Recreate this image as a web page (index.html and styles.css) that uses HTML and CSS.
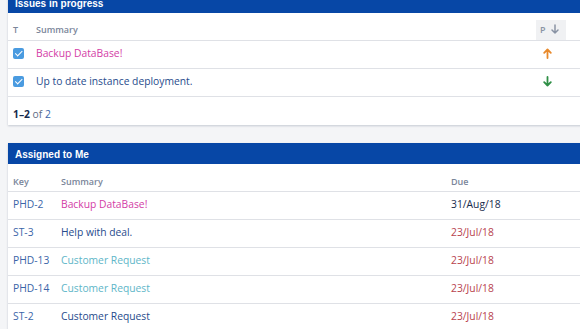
FILE: index.html
```html
<!DOCTYPE html>
<html lang="en">
<head>
    <meta charset="UTF-8">
    <meta name="viewport" content="width=device-width, initial-scale=1.0">
    <title>Dashboard</title>
    <link rel="stylesheet" href="styles.css">
</head>
<body>
    <div class="dashboard">
        <!-- Issues in progress -->
        <section class="gadget">
            <div class="gadget-title">Issues in progress</div>
            <table class="issues">
                <thead>
                    <tr>
                        <th class="col-type">T</th>
                        <th>Summary</th>
                        <th class="col-priority">
                            <span class="sort-box">P
                                <svg class="sort-arrow" width="8" height="10" viewBox="0 0 8 10"><path d="M4 1 V9 M1 6 L4 9 L7 6" fill="none" stroke="currentColor" stroke-width="1.5" stroke-linecap="round" stroke-linejoin="round"/></svg>
                            </span>
                        </th>
                        <th class="col-spacer"></th>
                    </tr>
                </thead>
                <tbody>
                    <tr>
                        <td class="col-type"><span class="checkbox"></span></td>
                        <td><a href="#" class="link-pink">Backup DataBase!</a></td>
                        <td class="col-priority">
                            <svg class="prio prio-up" width="9" height="11" viewBox="0 0 9 11"><path d="M4.5 10 V1.5 M1.2 4.8 L4.5 1.5 L7.8 4.8" fill="none" stroke="currentColor" stroke-width="1.8" stroke-linecap="round" stroke-linejoin="round"/></svg>
                        </td>
                        <td class="col-spacer"></td>
                    </tr>
                    <tr>
                        <td class="col-type"><span class="checkbox"></span></td>
                        <td><a href="#" class="link-navy">Up to date instance deployment.</a></td>
                        <td class="col-priority">
                            <svg class="prio prio-down" width="9" height="11" viewBox="0 0 9 11"><path d="M4.5 1 V9.5 M1.2 6.2 L4.5 9.5 L7.8 6.2" fill="none" stroke="currentColor" stroke-width="1.8" stroke-linecap="round" stroke-linejoin="round"/></svg>
                        </td>
                        <td class="col-spacer"></td>
                    </tr>
                </tbody>
            </table>
            <div class="paging"><strong>1–2</strong> of <a href="#">2</a></div>
        </section>

        <!-- Assigned to Me -->
        <section class="gadget">
            <div class="gadget-title">Assigned to Me</div>
            <table class="issues assigned">
                <thead>
                    <tr>
                        <th class="col-key">Key</th>
                        <th class="col-summary">Summary</th>
                        <th>Due</th>
                    </tr>
                </thead>
                <tbody>
                    <tr>
                        <td class="col-key"><a href="#">PHD-2</a></td>
                        <td class="col-summary"><a href="#" class="link-pink">Backup DataBase!</a></td>
                        <td class="due">31/Aug/18</td>
                    </tr>
                    <tr>
                        <td class="col-key"><a href="#">ST-3</a></td>
                        <td class="col-summary"><a href="#" class="link-navy">Help with deal.</a></td>
                        <td class="due overdue">23/Jul/18</td>
                    </tr>
                    <tr>
                        <td class="col-key"><a href="#">PHD-13</a></td>
                        <td class="col-summary"><a href="#" class="link-teal">Customer Request</a></td>
                        <td class="due overdue">23/Jul/18</td>
                    </tr>
                    <tr>
                        <td class="col-key"><a href="#">PHD-14</a></td>
                        <td class="col-summary"><a href="#" class="link-teal">Customer Request</a></td>
                        <td class="due overdue">23/Jul/18</td>
                    </tr>
                    <tr>
                        <td class="col-key"><a href="#">ST-2</a></td>
                        <td class="col-summary"><a href="#" class="link-navy">Customer Request</a></td>
                        <td class="due overdue">23/Jul/18</td>
                    </tr>
                </tbody>
            </table>
        </section>
    </div>
</body>
</html>
```

FILE: styles.css
```css
/* General Styles */
body {
    margin: 0;
    background: #f4f5f7;
    font-family: 'Open Sans', 'Noto Sans', sans-serif;
    font-size: 10.3px;
    color: #172b4d;
    overflow: hidden;
}

a {
    text-decoration: none;
}

.dashboard {
    padding-left: 8px;
    width: 592px;
    margin-top: -8px;
}

/* Gadget Card */
.gadget {
    background: #fff;
    box-shadow: 0 1px 2px rgba(9, 30, 66, 0.2);
    margin-bottom: 18px;
}

.gadget-title {
    background: #0747a6;
    color: #fff;
    font-weight: 700;
    font-size: 10px;
    height: 18px;
    line-height: 18px;
    padding: 3px 0 0 7px;
    font-family: 'Liberation Sans', sans-serif;
}

/* Tables */
.issues {
    width: 100%;
    border-collapse: collapse;
}

.issues th {
    text-align: left;
    font-weight: 600;
    font-size: 9px;
    color: #7a869a;
    line-height: 20px;
    padding: 7px 5px 0;
    border-bottom: 1px solid #dfe1e6;
    white-space: nowrap;
}

.issues td {
    line-height: 24px;
    padding: 0 5px 3px;
    border-bottom: 1px solid #dfe1e6;
    vertical-align: middle;
    white-space: nowrap;
}

.col-type {
    width: 13px;
}

.issues .col-priority {
    width: 30px;
    padding-left: 0;
    padding-right: 0;
}

.issues .col-spacer {
    width: 34px;
    padding: 0;
}

.sort-box {
    display: block;
    width: 30px;
    height: 20px;
    background: #f0f1f3;
    padding-left: 4px;
    box-sizing: border-box;
    font-weight: 600;
    color: #8993a4;
}

.sort-arrow {
    margin-left: 3px;
    vertical-align: -1px;
    color: #8993a4;
}

.prio {
    display: block;
    margin-left: 7px;
}

.prio-up {
    color: #e8892b;
}

.prio-down {
    color: #2f8f46;
}

/* Checkbox icon */
.checkbox {
    display: block;
    width: 11px;
    height: 11px;
    border-radius: 2px;
    background: #4a9be0;
    position: relative;
}

.checkbox::after {
    content: "";
    position: absolute;
    left: 3.5px;
    top: 1.5px;
    width: 2.5px;
    height: 5.5px;
    border: solid #fff;
    border-width: 0 1.5px 1.5px 0;
    transform: rotate(45deg);
}

/* Link colours */
.link-pink {
    color: #d33ca6;
}

.link-navy {
    color: #274b8c;
}

.link-teal {
    color: #5eb6c8;
}

.col-key a {
    color: #3b65a8;
}

/* Paging */
.paging {
    line-height: 20px;
    padding: 7px 0 1px 5px;
    color: #5e6c84;
}

.paging strong {
    color: #172b4d;
}

.paging a {
    color: #3b65a8;
}

/* Assigned to Me */
.col-key {
    width: 38px;
}

.col-summary {
    width: 380px;
}

.assigned th {
    padding-top: 8px;
    line-height: 19px;
}

.due {
    color: #172b4d;
}

.due.overdue {
    color: #b8434e;
}
```
